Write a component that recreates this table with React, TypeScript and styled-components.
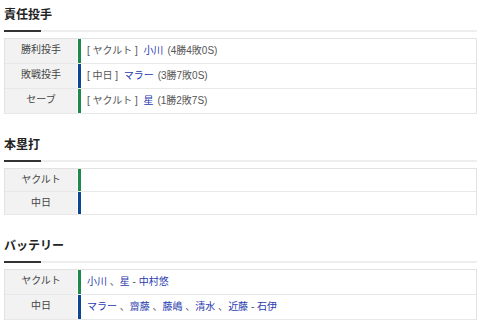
import styled, { createGlobalStyle } from "styled-components";

const GlobalStyle = createGlobalStyle`
    body {
        margin: 0;
        background: #fff;
        font-family: "Liberation Sans", "Noto Sans CJK JP", sans-serif;
        color: #333;
    }
`;

const Page = styled.div`
    display: flex;
    flex-direction: column;
    gap: 22px;
    padding: 6px 3px 0 4px;
`;

const Section = styled.section`
    display: flex;
    flex-direction: column;
`;

const Heading = styled.h2`
    margin: 0;
    font-size: 12px;
    line-height: 18px;
    font-weight: bold;
    color: #222;
    padding-bottom: 6px;
`;

const Rule = styled.div`
    height: 2px;
    background: linear-gradient(to right, #333 0 37px, #eeeeee 37px);
    margin-bottom: 6px;
`;

const Table = styled.div`
    display: flex;
    flex-direction: column;
    border: 1px solid #e2e2e2;
    border-bottom: none;
`;

const Row = styled.div`
    display: flex;
    border-bottom: 1px solid #e8e8e8;
`;

const Label = styled.div`
    width: 72px;
    flex-shrink: 0;
    background: #f2f2f2;
    font-size: 10px;
    line-height: 12px;
    padding: 5px 0;
    text-align: center;
    color: #444;
    border-right: 1px solid #fff;
`;

const Value = styled.div<{ $team: "s" | "d" }>`
    flex: 1;
    border-left: 3px solid ${p => (p.$team === "s" ? "#1d8a4a" : "#0c4592")};
    padding: 0 6px;
    font-size: 10px;
    line-height: 14px;
    display: flex;
    align-items: center;
    color: #555;
    white-space: pre;
`;

const FilledValue = styled(Value)`
    padding-top: 5px;
    padding-bottom: 5px;
`;

const Player = styled.span`
    color: #2a3bb0;
`;

const Stat = styled.span`
    color: #555;
    margin-left: 4px;
`;

type Pitcher = { label: string; team: "s" | "d"; teamName: string; name: string; stat: string };

const pitchers: Pitcher[] = [
    { label: "勝利投手", team: "s", teamName: "ヤクルト", name: "小川", stat: "(4勝4敗0S)" },
    { label: "敗戦投手", team: "d", teamName: "中日", name: "マラー", stat: "(3勝7敗0S)" },
    { label: "セーブ", team: "s", teamName: "ヤクルト", name: "星", stat: "(1勝2敗7S)" },
];

// pitchers joined by " 、", then " - " before the catcher
const Battery = ({ pitchers, catcher }: { pitchers: string[]; catcher: string }) => (
    <>
        {pitchers.map((n, i) => (
            <span key={n}>
                {i > 0 && <span>{" 、"}</span>}
                <Player>{n}</Player>
            </span>
        ))}
        <span>{" - "}</span>
        <Player>{catcher}</Player>
    </>
);

const App = () => {
    return (
        <Page>
            <GlobalStyle />
            <Section>
                <Heading>責任投手</Heading>
                <Rule />
                <Table>
                    {pitchers.map(p => (
                        <Row key={p.label}>
                            <Label>{p.label}</Label>
                            <FilledValue $team={p.team}>
                                <span>{`[ ${p.teamName} ]  `}</span>
                                <Player>{p.name}</Player>
                                <Stat>{p.stat}</Stat>
                            </FilledValue>
                        </Row>
                    ))}
                </Table>
            </Section>

            <Section>
                <Heading>本塁打</Heading>
                <Rule />
                <Table>
                    <Row>
                        <Label>ヤクルト</Label>
                        <Value $team="s" />
                    </Row>
                    <Row>
                        <Label>中日</Label>
                        <Value $team="d" />
                    </Row>
                </Table>
            </Section>

            <Section>
                <Heading>バッテリー</Heading>
                <Rule />
                <Table>
                    <Row>
                        <Label>ヤクルト</Label>
                        <FilledValue $team="s">
                            <Battery pitchers={["小川", "星"]} catcher="中村悠" />
                        </FilledValue>
                    </Row>
                    <Row>
                        <Label>中日</Label>
                        <FilledValue $team="d">
                            <Battery pitchers={["マラー", "齋藤", "藤嶋", "清水", "近藤"]} catcher="石伊" />
                        </FilledValue>
                    </Row>
                </Table>
            </Section>
        </Page>
    );
};

export default App;
